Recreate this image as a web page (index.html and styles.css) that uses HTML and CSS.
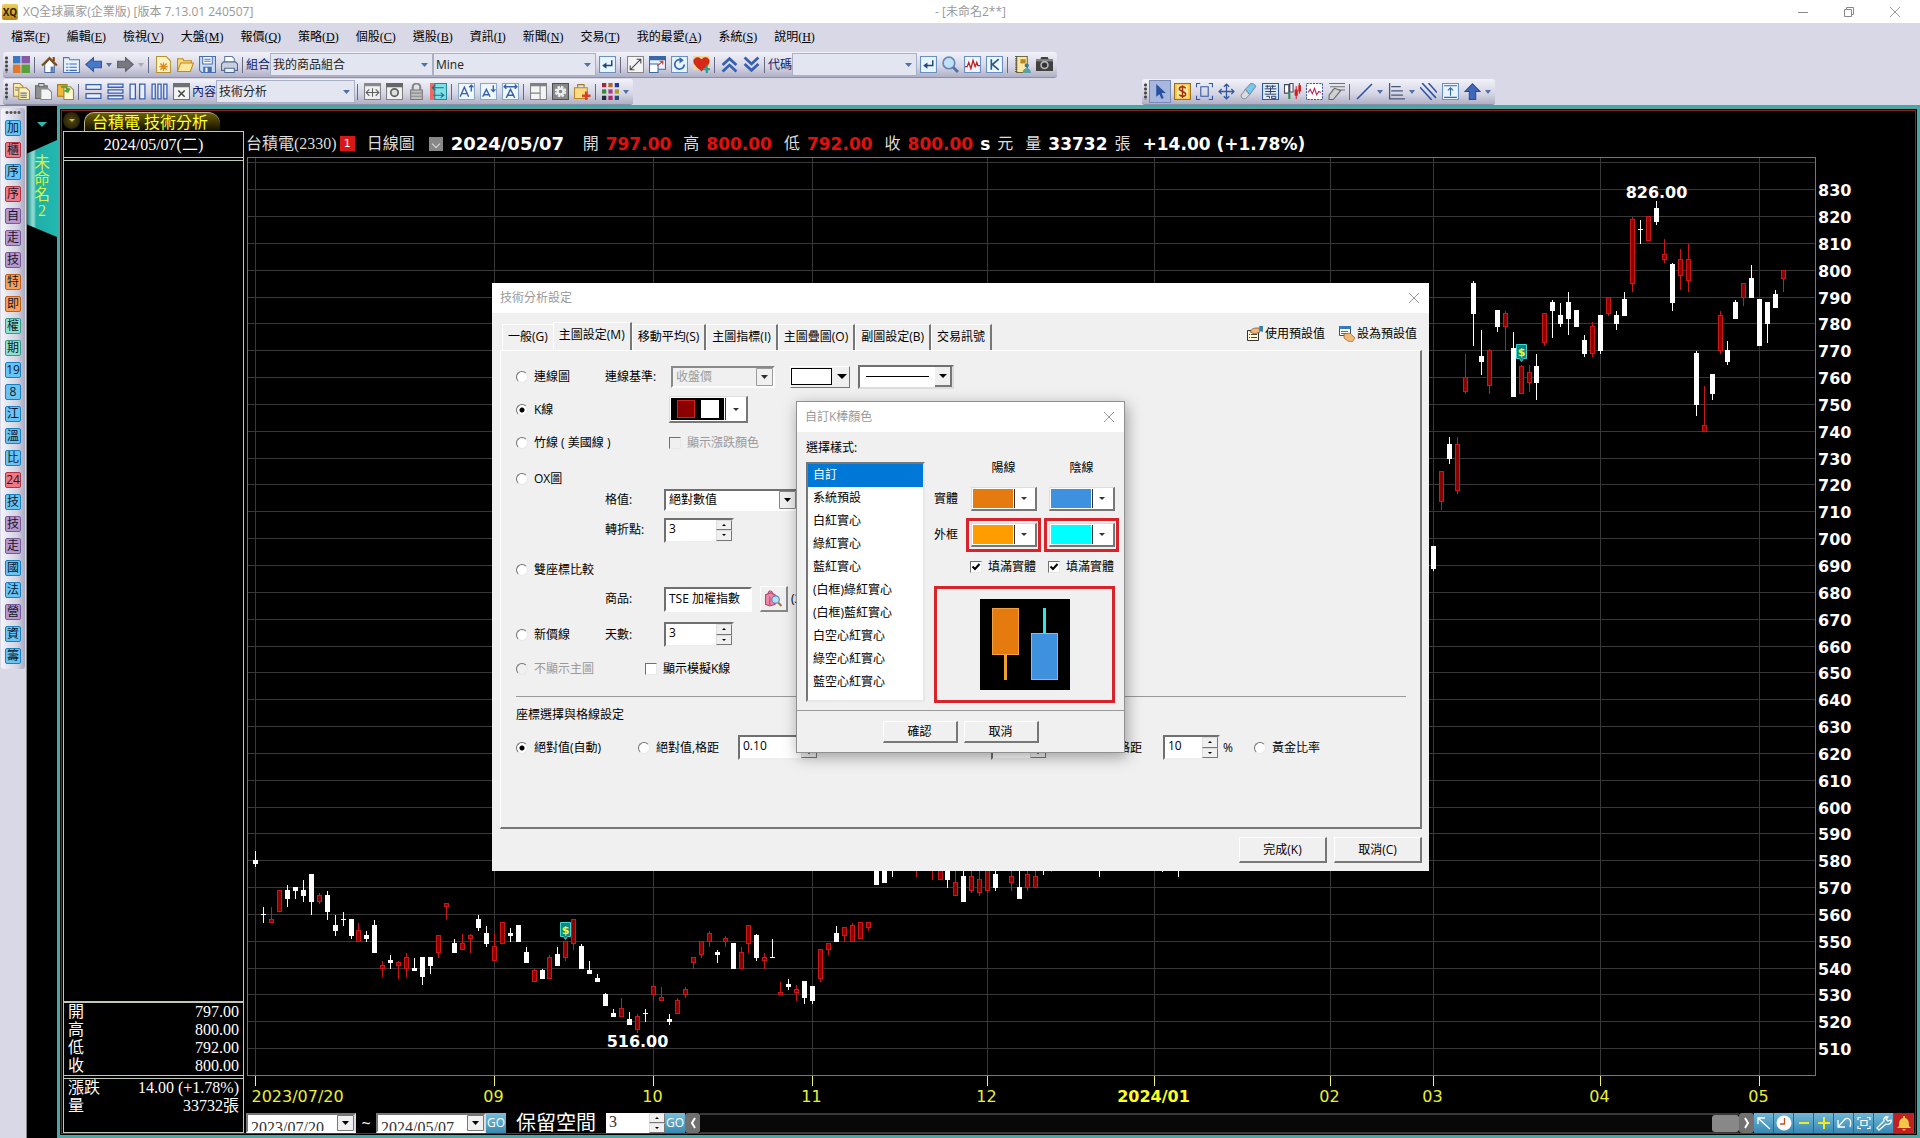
FILE: index.html
```html
<!DOCTYPE html>
<html lang="zh-Hant">
<head>
  <meta charset="UTF-8">
  <title>XQ全球贏家</title>
  <link rel="stylesheet" href="styles.css">
</head>
<body>

  <!-- 圖示 -->
  <svg class="sprite" aria-hidden="true">
    <symbol id="i-grid" viewBox="0 0 16 16"><path fill="#3878c0" d="M0 0h7v7H0z"/><path fill="#8858a8" d="M8 0h8v7H8z"/><path fill="#e07828" d="M0 8h7v8H0z"/><path fill="#58a038" d="M8 8h8v8H8z"/></symbol>
    <symbol id="i-home" viewBox="0 0 16 16"><path fill="#fff" stroke="#4868a0" d="M3.500 8v7.500h9V8L8 3z"/><path fill="#5880b8" d="M9 10h3v5H9z"/><path fill="none" stroke="#805010" stroke-width="2" d="M1 9l7-7 7 7"/><path fill="#904010" d="M11 1h2v4h-2z"/></symbol>
    <symbol id="i-list" viewBox="0 0 16 16"><path fill="#e8f2fc" stroke="#5078b0" d="M.5 1.500h5l1 2h9v12H.5z"/><path stroke="#3868b8" stroke-dasharray="2 1 7" d="M3 7.500h10M3 10.500h10M3 13.500h10"/></symbol>
    <symbol id="i-back" viewBox="0 0 16 16"><path fill="#4878c8" stroke="#3058a0" d="M.8 8L8 1.500V5h7.500v6H8v3.500z"/></symbol>
    <symbol id="i-fwd" viewBox="0 0 16 16"><path fill="#787880" stroke="#606068" d="M15.200 8L8 1.500V5H.5v6H8v3.500z"/></symbol>
    <symbol id="i-new" viewBox="0 0 16 16"><path fill="#fff4c8" stroke="#b89030" d="M1.500.5h9l4 4v11h-13z"/><path stroke="#e08818" stroke-width="1.200" d="M8 6v8M4 10h8M5 7l6 6M11 7l-6 6"/></symbol>
    <symbol id="i-open" viewBox="0 0 16 16"><path fill="#f8d878" stroke="#c08818" d="M.5 14.500v-12h5l1 2h7v2"/><path fill="#fce8a0" stroke="#c08818" d="M.5 14.500l3-8h12l-3 8z"/></symbol>
    <symbol id="i-save" viewBox="0 0 16 16"><path fill="#c8daf4" stroke="#4870b0" d="M.5.5h15v15H2.500l-2-2z"/><path fill="#fff" stroke="#4870b0" d="M3.500.5h9v7h-9z"/><path fill="#4870b0" d="M5 2.500h6v1H5zM5 4.500h6v1H5zM4 10h8v5H4z"/><path fill="#fff" d="M6 11h2v4H6z"/></symbol>
    <symbol id="i-print" viewBox="0 0 16 16"><path fill="#fff" stroke="#6078a0" d="M3.500 7V.5h7l2 2V7z"/><path fill="#c8d0e0" stroke="#506890" d="M.5 7.500l2-2h11l2 2v6H.5z"/><path fill="#e8f0f8" stroke="#506890" d="M3.500 11.500h9v4h-9z"/></symbol>
    <symbol id="i-enter" viewBox="0 0 16 16"><path fill="#e8f4ff" stroke="#6890c0" d="M.5.500h15v15H.5z"/><path fill="none" stroke="#204878" stroke-width="1.400" d="M12 4v5H5"/><path fill="#204878" d="M3 9l4-3v6z"/></symbol>
    <symbol id="i-expand" viewBox="0 0 16 16"><path fill="#f4f4f4" stroke="#888" d="M.5.5h15v15H.5z"/><path fill="none" stroke="#444" d="M3 13L13 3M9 3h4v4M3 9v4h4"/></symbol>
    <symbol id="i-win" viewBox="0 0 16 16"><path fill="#e8f0fc" stroke="#3868a8" d="M.5.5h15v12H.5z"/><path fill="#3868a8" d="M0 0h16v4H0z"/><path fill="#fff" stroke="#3868a8" d="M.5 7.500h8v8h-8z"/><path stroke="#c04020" d="M8 9l5-4M10 5h3v3" fill="none"/></symbol>
    <symbol id="i-reload" viewBox="0 0 16 16"><path fill="#e8f4ff" stroke="#6890c0" d="M.5.5h15v15H.5z"/><path fill="none" stroke="#3868b0" stroke-width="1.600" d="M9 3.500a4.500 4.500 0 1 0 3.500 4.500"/><path fill="#3868b0" d="M8 1l4 3-4 3z"/></symbol>
    <symbol id="i-heart" viewBox="0 0 16 16"><path fill="#f8d890" d="M0 0h15v13H0z"/><path fill="#d82818" stroke="#a01808" stroke-width=".6" d="M8 14C2 9 .5 7 .8 4.200 1.200 1.500 5.500.200 8 3.500 10.500.200 14.800 1.500 15.200 4.200 15.500 7 14 9 8 14z"/><path stroke="#289898" stroke-width="2" d="M13 9v7M9.500 12.500h7"/></symbol>
    <symbol id="i-up2" viewBox="0 0 16 16"><path fill="none" stroke="#3860b0" stroke-width="2.600" d="M1.500 8.500L8 2.500l6.500 6M1.500 14.500L8 8.500l6.500 6"/></symbol>
    <symbol id="i-down2" viewBox="0 0 16 16"><path fill="none" stroke="#3860b0" stroke-width="2.600" d="M1.500 1.500L8 7.500l6.500-6M1.500 7.500L8 13.500l6.500-6"/></symbol>
    <symbol id="i-search" viewBox="0 0 16 16"><circle cx="6.500" cy="6.500" r="5.500" fill="#c0e0f8" stroke="#6888b8" stroke-width="1.600"/><path stroke="#5070a8" stroke-width="2.600" d="M10.500 10.500l4.500 4.500"/></symbol>
    <symbol id="i-wave" viewBox="0 0 16 16"><path fill="#f0f4fc" stroke="#6890c0" d="M.5.5h15v15H.5z"/><path fill="none" stroke="#c02020" stroke-width="1.200" d="M1 10h2l1.500-4 2 6 2-8 2 6 1.500-4 1 3h2"/></symbol>
    <symbol id="i-k" viewBox="0 0 16 16"><path fill="#f0f8ff" stroke="#6890c0" d="M.5.5h15v15H.5z"/><path fill="none" stroke="#285890" stroke-width="1.600" d="M5 3v10M12 3L6 8l6 5"/></symbol>
    <symbol id="i-book" viewBox="0 0 16 16"><path fill="#f8e8a8" stroke="#706840" d="M2.500.5h10v15h-10z"/><path stroke="#554" stroke-dasharray="1 1" stroke-width="2" d="M2 0v16"/><path fill="#b88820" d="M6 3h5v4H6z"/><circle cx="12" cy="9" r="2" fill="#387898"/><path fill="#58a0a8" d="M8 16c0-6 8-6 8 0z"/></symbol>
    <symbol id="i-cam" viewBox="0 0 16 16"><path fill="#404040" d="M0 3h4l1-2h6l1 2h4v11H0z"/><path fill="#888" d="M0 3h16v2H0z"/><circle cx="8" cy="8.500" r="4" fill="#b8b8b8"/><circle cx="8" cy="8.500" r="2.500" fill="#303438"/></symbol>
    <symbol id="i-copy" viewBox="0 0 16 16"><path fill="#fce8a8" stroke="#a88838" d="M.5.5h6l3 3v9h-9z"/><path fill="#fff0b8" stroke="#a88838" d="M5.500 4.500h7l3 3v8h-10z"/><path stroke="#5878a8" d="M7 9.500h6M7 11.500h6M7 13.500h6M2 4.500h3M2 6.500h3"/></symbol>
    <symbol id="i-paste" viewBox="0 0 16 16"><path fill="#909090" stroke="#666" d="M.5 2.500h11v12H.5z"/><path fill="#ccc" stroke="#666" d="M3.500.5h5v3h-5z"/><path fill="#f4f4f4" stroke="#888" d="M5.500 5.500h7l3 3v7h-10z"/></symbol>
    <symbol id="i-pages" viewBox="0 0 16 16"><path fill="#f0b838" stroke="#a87818" d="M.5 1.500h9v11h-9z"/><path fill="#fff8d0" stroke="#888838" d="M6.500 3.500h6l3 3v9h-9z"/><path fill="none" stroke="#58a038" stroke-width="2" d="M4 4c4-2 6 1 6 4l-3-1M10 8l2-3"/></symbol>
    <symbol id="i-h2" viewBox="0 0 16 16"><path fill="#e8eefa" stroke="#3860b0" stroke-width="1.200" d="M1 1.500h14v4.500H1zM1 10h14v4.500H1z"/></symbol>
    <symbol id="i-h3" viewBox="0 0 16 16"><path fill="#e8eefa" stroke="#3860b0" stroke-width="1.200" d="M1 1h14v3H1zM1 6.500h14v3H1zM1 12h14v3H1z"/></symbol>
    <symbol id="i-v2" viewBox="0 0 16 16"><path fill="#e8eefa" stroke="#3860b0" stroke-width="1.200" d="M1 1h5v14H1zM10 1h5v14h-5z"/></symbol>
    <symbol id="i-v3" viewBox="0 0 16 16"><path fill="#e8eefa" stroke="#3860b0" stroke-width="1.200" d="M1 1h3v14H1zM6.500 1h3v14h-3zM12 1h3v14h-3z"/></symbol>
    <symbol id="i-close" viewBox="0 0 16 16"><path fill="#f4f4f4" stroke="#707070" d="M.5.5h15v15H.5z"/><path fill="#707070" d="M0 0h16v4H0z"/><path stroke="#444" stroke-width="1.400" d="M5 7l6 6M11 7l-6 6"/></symbol>
    <symbol id="i-fit" viewBox="0 0 16 16"><path fill="#f0f0f0" stroke="#808080" d="M.5.5h15v15H.5z"/><path fill="#888" d="M0 0h16v3H0z"/><path fill="none" stroke="#606060" d="M2 9h12M5 6L2 9l3 3M11 6l3 3-3 3M8 5v8"/></symbol>
    <symbol id="i-ring" viewBox="0 0 16 16"><path fill="#f0f0f0" stroke="#808080" d="M.5.5h15v15H.5z"/><path fill="#666" d="M0 0h16v4H0z"/><circle cx="8" cy="9" r="3.500" fill="#ddd" stroke="#606060" stroke-width="1.600"/></symbol>
    <symbol id="i-lock" viewBox="0 0 16 16"><path fill="none" stroke="#888" stroke-width="2" d="M4.500 7V4a3.500 3.500 0 0 1 7 0v3"/><path fill="#c0c0c0" stroke="#777" d="M2.500 6.500h11v9h-11z"/><path stroke="#888" d="M3 9.500h10M3 12.500h10"/></symbol>
    <symbol id="i-swap" viewBox="0 0 16 16"><path fill="#f06860" d="M0 0h7v16H0z"/><path fill="#80e0e8" stroke="#208898" d="M4.500.5h11v15h-11z"/><path fill="none" stroke="#207080" d="M2 4.500h11M5 2L2 4.500 5 7M3 11.500h10M10 9l3 2.500-3 2.500"/></symbol>
    <symbol id="i-aup" viewBox="0 0 16 16"><path fill="#f0f8ff" stroke="#88a8c8" d="M.5.5h15v15H.5z"/><path fill="none" stroke="#3860a8" stroke-width="1.300" d="M2 13L6 4l4 9M3.500 10h5M12.500 8V2M10.500 4l2-2 2 2"/></symbol>
    <symbol id="i-adown" viewBox="0 0 16 16"><path fill="#f0f8ff" stroke="#88a8c8" d="M.5.5h15v15H.5z"/><path fill="none" stroke="#3860a8" stroke-width="1.300" d="M2.500 13L6 6l3.500 7M4 11h4M12.500 2v6M10.500 6l2 2 2-2"/></symbol>
    <symbol id="i-awide" viewBox="0 0 16 16"><path fill="#f0f8ff" stroke="#88a8c8" d="M.5.5h15v15H.5z"/><path fill="none" stroke="#3860a8" stroke-width="1.300" d="M4 14l4-8 4 8M5.500 11.500h5M2 3.500h12M4 1.500l-2 2 2 2M12 1.500l2 2-2 2"/></symbol>
    <symbol id="i-pane" viewBox="0 0 16 16"><path fill="#f4f4f4" stroke="#808080" d="M.5.5h15v15H.5z"/><path fill="#808080" d="M0 0h16v3H0zM9 3h1v12H9zM1 9h8v1H1z"/></symbol>
    <symbol id="i-gear" viewBox="0 0 16 16"><path fill="#888" stroke="#505050" d="M.5.5h15v15H.5z"/><circle cx="8" cy="8" r="4.200" fill="none" stroke="#eee" stroke-width="2.400" stroke-dasharray="2.200 1.100"/><circle cx="8" cy="8" r="2.700" fill="none" stroke="#eee" stroke-width="2"/></symbol>
    <symbol id="i-bag" viewBox="0 0 16 16"><path fill="none" stroke="#a07828" d="M3.500 5V1.500h6V5"/><path fill="#fcdc80" stroke="#b88828" d="M.5 4.500h12v10H.5z"/><path stroke="#d84028" stroke-width="2.400" d="M11.500 8v8M7.500 12h8"/></symbol>
    <symbol id="i-nine" viewBox="0 0 16 16"><path fill="#a02838" d="M0 0h4v4H0z"/><path fill="#b06828" d="M6 0h4v4H6z"/><path fill="#283898" d="M12 0h4v4h-4z"/><path fill="#388838" d="M0 6h4v4H0z"/><path fill="#a83888" d="M6 6h4v4H6z"/><path fill="#a8a028" d="M12 6h4v4h-4z"/><path fill="#282838" d="M0 12h4v4H0z"/><path fill="#a82868" d="M6 12h4v4H6z"/><path fill="#284878" d="M12 12h4v4h-4z"/></symbol>
    <symbol id="i-ptr" viewBox="0 0 16 16"><path fill="#2850a0" d="M4 1v12l3-2.500L9 15l2-1-2-4.500h4z"/></symbol>
    <symbol id="i-usd" viewBox="0 0 16 16"><path fill="#fcc850" stroke="#987020" d="M.5.5h15v15H.5z"/><path fill="#fde8a0" d="M3 2h10v12H3z"/><path fill="none" stroke="#a03010" stroke-width="1.400" d="M11 5C10 3 5 3 5 5.500S11 8 11 10.500 6 13 5 11M8 2v12"/></symbol>
    <symbol id="i-sel" viewBox="0 0 16 16"><path fill="none" stroke="#3058a0" d="M.5 4V.5H4M12 .5h3.500V4M15.500 12v3.500H12M4 15.500H.5V12M4.500 3.500h7v9h-7z"/></symbol>
    <symbol id="i-move" viewBox="0 0 16 16"><path fill="none" stroke="#3058a0" stroke-width="1.200" d="M8 1v14M1 8h14M5.500 3.500L8 1l2.500 2.500M5.500 12.500L8 15l2.500-2.500M3.500 5.500L1 8l2.500 2.500M12.500 5.500L15 8l-2.500 2.500"/></symbol>
    <symbol id="i-erase" viewBox="0 0 16 16"><path fill="#78c8f0" stroke="#607888" stroke-width=".8" d="M5 6l5-5.500q3-.5 5 2.500L9 11z"/><path fill="#d8dce0" stroke="#708090" stroke-width=".8" d="M5 6l-4 5.500q0 3.500 4 3.500l4-4z"/></symbol>
    <symbol id="i-chip" viewBox="0 0 16 16"><path fill="#e0ecf8" stroke="#3058a0" d="M.5.5h15v15H.5z"/><path fill="none" stroke="#283c68" stroke-width=".9" d="M3 3h10M2.500 5.500h11M3 8h10M2.500 10.500h11M5 2v3M10 2v3M8 4v6M4 12.500h3v2M9 12.500h4v2H9z"/></symbol>
    <symbol id="i-candle" viewBox="0 0 16 16"><path fill="#fff" stroke="#404860" d="M.5 1.500h4v8h-4zM5.500.5h3v8h-3z"/><path stroke="#289040" stroke-width="2" d="M5 9v6"/><path stroke="#d02020" d="M11.500 3v12M14.500 0v10"/><path fill="#d02020" d="M10 6h3v6h-3zM13.500 2H16v6h-2.500z"/></symbol>
    <symbol id="i-box" viewBox="0 0 16 16"><path fill="#fff" stroke="#3058a0" stroke-dasharray="2 1" d="M.5.5h15v15H.5z"/><path fill="none" stroke="#c02050" d="M2 9l2-3 2 4 2-5 2 6 2-3 2 1"/></symbol>
    <symbol id="i-brush" viewBox="0 0 16 16"><path stroke="#707078" d="M1 .5h15M2 3.500h14M4 6.500h12"/><path fill="#d0d0d0" stroke="#666" d="M6 5l6 2-7 8.500H1v-4z"/></symbol>
    <symbol id="i-line" viewBox="0 0 16 16"><path stroke="#2850a0" stroke-width="1.400" d="M1 15L15 1"/></symbol>
    <symbol id="i-levels" viewBox="0 0 16 16"><path fill="none" stroke="#485878" stroke-width="1.200" d="M1.500 0v15H16M3 3.500h9M3 7.500h11M3 11.500h11"/></symbol>
    <symbol id="i-para" viewBox="0 0 16 16"><path stroke="#2850a0" stroke-width="1.400" d="M0 4l11 12M2 0l13 14M8 0l8 9"/></symbol>
    <symbol id="i-upbox" viewBox="0 0 16 16"><path fill="#e8f4ff" stroke="#6890c0" d="M.5.5h15v15H.5z"/><path fill="none" stroke="#3868a8" d="M2 2.500h12M2 13.500h12M8 12V5M5.500 7L8 4.500 10.500 7"/></symbol>
    <symbol id="i-bigup" viewBox="0 0 16 16"><path fill="#4068b8" stroke="#2848a0" d="M8 .8L15 8h-4v7.500H5V8H1z"/></symbol>
    <symbol id="i-x" viewBox="0 0 12 12"><path stroke="#999" d="M1 1l10 10M11 1L1 11"/></symbol>
    <symbol id="i-use" viewBox="0 0 16 16"><path fill="#fff8d8" stroke="#333" d="M.5 4.500h11v10H.5z"/><path stroke="#444" stroke-dasharray="1 1 6" d="M2 8.500h8M2 11.500h8"/><path fill="#f0b878" stroke="#805030" stroke-width=".8" d="M3 6c2-4 4-4 9-4l1 4-5 2z"/><path fill="#3880b0" d="M12 0h4v6l-3-1z"/></symbol>
    <symbol id="i-set" viewBox="0 0 16 16"><path fill="#fff" stroke="#405060" d="M.5.5h11v9H.5z"/><path fill="#3878c0" d="M0 0h12v3H0z"/><path stroke="#666" d="M2 5.500h7M2 7.500h7"/><path fill="#f0b878" stroke="#a06830" stroke-width=".8" d="M5 8l6-1 5 5-3 4c-3 0-6-2-8-4z"/></symbol>
    <symbol id="i-find" viewBox="0 0 16 16"><path fill="#f088a8" stroke="#b04870" d="M.5 4.500l5-2 4 2v9l-5 1.500-4-1.500z"/><path fill="none" stroke="#b04870" d="M3 4c0-4 4-4 4 0M4.500 6v8"/><circle cx="10" cy="9" r="3.500" fill="#b8e0f8" stroke="#5080a8"/><path stroke="#a07840" stroke-width="2" d="M12.500 12l3 3"/></symbol>
    <symbol id="i-nw" viewBox="0 0 16 16"><path fill="none" stroke="#fff" stroke-width="1.300" d="M2 9V3h7M2 3l12 11"/></symbol>
    <symbol id="i-clock" viewBox="0 0 16 16"><circle cx="8" cy="8" r="7.500" fill="#fff"/><path fill="none" stroke="#c05020" stroke-width="1.300" d="M8.500 3v6H4"/></symbol>
    <symbol id="i-minus" viewBox="0 0 16 16"><path stroke="#f0e820" stroke-width="2" d="M3 8h10"/></symbol>
    <symbol id="i-plus" viewBox="0 0 16 16"><path stroke="#f0e820" stroke-width="2" d="M2 8h12M8 2v12"/></symbol>
    <symbol id="i-undo" viewBox="0 0 16 16"><path fill="none" stroke="#fff" stroke-width="1.300" d="M2 5v7h7M2 12l7-8c4-2 7 1 5 8"/></symbol>
    <symbol id="i-frame" viewBox="0 0 16 16"><path fill="none" stroke="#fff" stroke-width="1.200" d="M2 5V2.500h3M11 2.500h3V5M14 11v2.500h-3M5 13.500H2V11M5 5.500h6v5H5z"/></symbol>
    <symbol id="i-wrench" viewBox="0 0 16 16"><path fill="none" stroke="#fff" stroke-width="1.300" d="M3 15l-2-2 7-7c-1-3 2-5 4-4l-2 2 2 2 3-1c1 3-2 5-5 4z"/></symbol>
    <symbol id="i-bell" viewBox="0 0 16 16"><path fill="#f0c848" d="M7 1h2v2c4 1 4 5 4 8l2 2H1l2-2c0-3 0-7 4-8zM6 14h4l-2 2z"/></symbol>
  </svg>

  <header class="titlebar">
    <span class="logo">XQ</span>
    <span class="app-name">XQ全球贏家(企業版) [版本 7.13.01 240507]</span>
    <span class="doc-name">- [未命名2**]</span>
    <div class="win-buttons">
      <button type="button" aria-label="最小化"><svg viewBox="0 0 12 12"><path stroke="#888" d="M1 6.500h10"/></svg></button>
      <button type="button" aria-label="還原"><svg viewBox="0 0 12 12"><path fill="none" stroke="#888" d="M1.500 3.500h7v7h-7zM3.500 3.500v-2h7v7h-2"/></svg></button>
      <button type="button" aria-label="關閉"><svg><use href="#i-x"/></svg></button>
    </div>
  </header>

  <nav class="menubar">
    <a href="#">檔案(<u>F</u>)</a>
    <a href="#">編輯(<u>E</u>)</a>
    <a href="#">檢視(<u>V</u>)</a>
    <a href="#">大盤(<u>M</u>)</a>
    <a href="#">報價(<u>Q</u>)</a>
    <a href="#">策略(<u>D</u>)</a>
    <a href="#">個股(<u>C</u>)</a>
    <a href="#">選股(<u>B</u>)</a>
    <a href="#">資訊(<u>I</u>)</a>
    <a href="#">新聞(<u>N</u>)</a>
    <a href="#">交易(<u>T</u>)</a>
    <a href="#">我的最愛(<u>A</u>)</a>
    <a href="#">系統(<u>S</u>)</a>
    <a href="#">說明(<u>H</u>)</a>
  </nav>

  <div class="toolbars">
    <div class="toolbar">
      <span class="grip"></span>
      <button type="button" aria-label="首頁格"><svg><use href="#i-grid"/></svg></button>
      <span class="sep"></span>
      <button type="button" aria-label="首頁"><svg><use href="#i-home"/></svg></button>
      <button type="button" aria-label="清單"><svg><use href="#i-list"/></svg></button>
      <button type="button" aria-label="上一頁"><svg><use href="#i-back"/></svg></button>
      <button type="button" class="drop" aria-label="上一頁清單"></button>
      <button type="button" aria-label="下一頁"><svg><use href="#i-fwd"/></svg></button>
      <button type="button" class="drop off" aria-label="下一頁清單"></button>
      <span class="sep"></span>
      <button type="button" aria-label="新增"><svg><use href="#i-new"/></svg></button>
      <button type="button" aria-label="開啟"><svg><use href="#i-open"/></svg></button>
      <button type="button" aria-label="儲存"><svg><use href="#i-save"/></svg></button>
      <button type="button" aria-label="列印"><svg><use href="#i-print"/></svg></button>
      <span class="sep"></span>
      <label for="group">組合</label>
      <select id="group" class="tool-select wide"><option>我的商品組合</option></select>
      <select class="tool-select wide" aria-label="清單"><option>Mine</option></select>
      <button type="button" aria-label="確定"><svg><use href="#i-enter"/></svg></button>
      <span class="sep"></span>
      <button type="button" aria-label="放大"><svg><use href="#i-expand"/></svg></button>
      <button type="button" aria-label="視窗"><svg><use href="#i-win"/></svg></button>
      <button type="button" aria-label="重新整理"><svg><use href="#i-reload"/></svg></button>
      <button type="button" aria-label="加入最愛"><svg><use href="#i-heart"/></svg></button>
      <span class="sep"></span>
      <button type="button" aria-label="上移"><svg><use href="#i-up2"/></svg></button>
      <button type="button" aria-label="下移"><svg><use href="#i-down2"/></svg></button>
      <span class="sep"></span>
      <label for="code">代碼</label>
      <select id="code" class="tool-select mid"><option></option></select>
      <button type="button" aria-label="送出"><svg><use href="#i-enter"/></svg></button>
      <button type="button" aria-label="搜尋"><svg><use href="#i-search"/></svg></button>
      <button type="button" aria-label="走勢"><svg><use href="#i-wave"/></svg></button>
      <button type="button" aria-label="K線"><svg><use href="#i-k"/></svg></button>
      <span class="sep"></span>
      <button type="button" aria-label="筆記"><svg><use href="#i-book"/></svg></button>
      <button type="button" aria-label="拍照"><svg><use href="#i-cam"/></svg></button>
    </div>

    <div class="toolbar-row">
      <div class="toolbar">
        <span class="grip"></span>
        <button type="button" aria-label="複製"><svg><use href="#i-copy"/></svg></button>
        <button type="button" aria-label="貼上"><svg><use href="#i-paste"/></svg></button>
        <button type="button" aria-label="複製頁面"><svg><use href="#i-pages"/></svg></button>
        <span class="sep"></span>
        <button type="button" aria-label="水平二分"><svg><use href="#i-h2"/></svg></button>
        <button type="button" aria-label="水平三分"><svg><use href="#i-h3"/></svg></button>
        <button type="button" aria-label="垂直二分"><svg><use href="#i-v2"/></svg></button>
        <button type="button" aria-label="垂直三分"><svg><use href="#i-v3"/></svg></button>
        <button type="button" aria-label="關閉視窗"><svg><use href="#i-close"/></svg></button>
        <label for="content">內容</label>
        <select id="content" class="tool-select narrow"><option>技術分析</option></select>
        <span class="sep"></span>
        <button type="button" aria-label="調整"><svg><use href="#i-fit"/></svg></button>
        <button type="button" aria-label="連動"><svg><use href="#i-ring"/></svg></button>
        <button type="button" aria-label="鎖定"><svg><use href="#i-lock"/></svg></button>
        <button type="button" aria-label="交換"><svg><use href="#i-swap"/></svg></button>
        <span class="sep"></span>
        <button type="button" aria-label="字放大"><svg><use href="#i-aup"/></svg></button>
        <button type="button" aria-label="字縮小"><svg><use href="#i-adown"/></svg></button>
        <button type="button" aria-label="字寬"><svg><use href="#i-awide"/></svg></button>
        <span class="sep"></span>
        <button type="button" aria-label="版面"><svg><use href="#i-pane"/></svg></button>
        <button type="button" aria-label="設定"><svg><use href="#i-gear"/></svg></button>
        <button type="button" aria-label="加入"><svg><use href="#i-bag"/></svg></button>
        <span class="sep"></span>
        <button type="button" aria-label="色彩"><svg><use href="#i-nine"/></svg></button>
        <button type="button" class="drop" aria-label="色彩清單"></button>
      </div>

      <div class="toolbar draw-tools">
        <span class="grip"></span>
        <button type="button" class="pressed" aria-label="游標"><svg><use href="#i-ptr"/></svg></button>
        <button type="button" aria-label="除權息"><svg><use href="#i-usd"/></svg></button>
        <button type="button" aria-label="區域"><svg><use href="#i-sel"/></svg></button>
        <button type="button" aria-label="移動"><svg><use href="#i-move"/></svg></button>
        <button type="button" aria-label="橡皮擦"><svg><use href="#i-erase"/></svg></button>
        <button type="button" aria-label="籌碼"><svg><use href="#i-chip"/></svg></button>
        <button type="button" aria-label="K棒"><svg><use href="#i-candle"/></svg></button>
        <button type="button" aria-label="區間"><svg><use href="#i-box"/></svg></button>
        <button type="button" aria-label="清除"><svg><use href="#i-brush"/></svg></button>
        <span class="sep"></span>
        <button type="button" aria-label="直線"><svg><use href="#i-line"/></svg></button>
        <button type="button" class="drop" aria-label="直線清單"></button>
        <button type="button" aria-label="黃金分割"><svg><use href="#i-levels"/></svg></button>
        <button type="button" class="drop" aria-label="黃金分割清單"></button>
        <button type="button" aria-label="平行線"><svg><use href="#i-para"/></svg></button>
        <button type="button" aria-label="高低"><svg><use href="#i-upbox"/></svg></button>
        <button type="button" aria-label="箭頭"><svg><use href="#i-bigup"/></svg></button>
        <button type="button" class="drop" aria-label="箭頭清單"></button>
      </div>
    </div>
  </div>

  <main class="workspace">
    <div class="dock-col">
      <div class="dock">
        <span class="dock-grip"></span>
        <button type="button" class="blue">加</button>
        <button type="button" class="red">櫃</button>
        <button type="button" class="blue">序</button>
        <button type="button" class="red">序</button>
        <button type="button" class="purple">自</button>
        <button type="button" class="purple">走</button>
        <button type="button" class="purple">技</button>
        <button type="button" class="orange">特</button>
        <button type="button" class="orange">即</button>
        <button type="button" class="green">權</button>
        <button type="button" class="green">期</button>
        <button type="button" class="blue">19</button>
        <button type="button" class="blue">8</button>
        <button type="button" class="blue">江</button>
        <button type="button" class="blue">溫</button>
        <button type="button" class="blue">比</button>
        <button type="button" class="red">24</button>
        <button type="button" class="blue">技</button>
        <button type="button" class="purple">技</button>
        <button type="button" class="purple">走</button>
        <button type="button" class="blue">國</button>
        <button type="button" class="blue">法</button>
        <button type="button" class="purple">營</button>
        <button type="button" class="blue">資</button>
        <button type="button" class="blue">籌</button>
      </div>
    </div>

    <div class="page-tabs">
      <span class="page-arrow"></span>
      <a href="#" class="page-tab">未命名2</a>
    </div>

    <div class="frame">
      <div class="frame-inner">
        <div class="tab-row">
          <button type="button" class="round" aria-label="分頁清單"></button>
          <a href="#" class="chart-tab">台積電 技術分析</a>
        </div>

        <div class="content">
          <aside class="side">
            <div class="side-date">2024/05/07(二)</div>
            <div class="side-empty"></div>
            <dl class="quote">
              <div><dt>開</dt><dd>797.00</dd></div>
              <div><dt>高</dt><dd>800.00</dd></div>
              <div><dt>低</dt><dd>792.00</dd></div>
              <div><dt>收</dt><dd>800.00</dd></div>
            </dl>
            <dl class="quote change">
              <div><dt>漲跌</dt><dd>14.00 (+1.78%)</dd></div>
              <div><dt>量</dt><dd>33732張</dd></div>
            </dl>
          </aside>

          <section class="chart-col">
            <div class="chart-head">
              <span class="stock">台積電(2330)<b class="badge">1</b></span>
              <span class="period">日線圖</span>
              <button type="button" class="period-drop" aria-label="週期"></button>
              <b class="date">2024/05/07</b>
              <span class="pair">開<b class="up">797.00</b></span>
              <span class="pair">高<b class="up">800.00</b></span>
              <span class="pair">低<b class="up">792.00</b></span>
              <span class="pair">收<b class="up">800.00</b><b>s</b>元</span>
              <span class="pair">量<b>33732</b>張</span>
              <b>+14.00 (+1.78%)</b>
            </div>
            <div class="plot"><svg id="chart"></svg></div>
            <div class="chart-foot">
              <select class="date-select" aria-label="起始日"><option>2023/07/20</option></select>
              <span class="tilde">~</span>
              <select class="date-select" aria-label="結束日"><option>2024/05/07</option></select>
              <button type="button" class="go">GO</button>
              <label for="space" class="space-label">保留空間</label>
              <span class="spin foot-spin"><input id="space" type="text" value="3"><span class="spin-btns"><button type="button" aria-label="增加"></button><button type="button" aria-label="減少"></button></span></span>
              <button type="button" class="go">GO</button>
              <button type="button" class="scroll-btn" aria-label="往左"><svg viewBox="0 0 8 12"><path fill="none" stroke="#fff" stroke-width="2" d="M6 1L3 6l3 5"/></svg></button>
              <div class="track"><span class="thumb"></span></div>
              <button type="button" class="scroll-btn" aria-label="往右"><svg viewBox="0 0 8 12"><path fill="none" stroke="#fff" stroke-width="2" d="M2 1l3 5-3 5"/></svg></button>
              <div class="foot-icons">
                <button type="button" aria-label="游標"><svg><use href="#i-nw"/></svg></button>
                <button type="button" aria-label="時間"><svg><use href="#i-clock"/></svg></button>
                <button type="button" aria-label="縮小"><svg><use href="#i-minus"/></svg></button>
                <button type="button" aria-label="放大"><svg><use href="#i-plus"/></svg></button>
                <button type="button" aria-label="復原"><svg><use href="#i-undo"/></svg></button>
                <button type="button" aria-label="全圖"><svg><use href="#i-frame"/></svg></button>
                <button type="button" aria-label="工具"><svg><use href="#i-wrench"/></svg></button>
                <button type="button" class="alarm" aria-label="警示"><svg><use href="#i-bell"/></svg></button>
              </div>
            </div>
          </section>
        </div>
      </div>
    </div>
  </main>

  <!-- 技術分析設定 -->
  <section class="dialog settings" role="dialog" aria-label="技術分析設定">
    <div class="dialog-title"><span>技術分析設定</span><button type="button" aria-label="關閉"><svg><use href="#i-x"/></svg></button></div>
    <div class="tabs-row">
      <div class="tabs">
        <button type="button">一般(G)</button>
        <button type="button" class="active">主圖設定(M)</button>
        <button type="button">移動平均(S)</button>
        <button type="button">主圖指標(I)</button>
        <button type="button">主圖疊圖(O)</button>
        <button type="button">副圖設定(B)</button>
        <button type="button">交易訊號</button>
      </div>
      <div class="presets">
        <button type="button"><svg><use href="#i-use"/></svg>使用預設值</button>
        <button type="button"><svg><use href="#i-set"/></svg>設為預設值</button>
      </div>
    </div>

    <div class="panel">
      <div class="row">
        <label class="opt"><input type="radio" name="kind">連線圖</label>
        <label for="base" class="caption">連線基準:</label>
        <div class="fields line-fields">
          <select id="base" class="combo base-combo" disabled><option>收盤價</option></select>
          <button type="button" class="line-color" aria-label="線條顏色"><span></span></button>
          <button type="button" class="line-style" aria-label="線條樣式"><span></span><i class="knob"></i></button>
        </div>
      </div>
      <div class="row">
        <label class="opt"><input type="radio" name="kind" checked>K線</label>
        <span></span>
        <div class="fields inset">
          <button type="button" class="pick k-pick" aria-label="K線顏色"><span class="k-colors"><i class="k-red"></i><i class="k-white"></i></span><span class="pick-arrow"></span></button>
        </div>
      </div>
      <div class="row">
        <label class="opt wide-opt"><input type="radio" name="kind">竹線 ( 美國線 )</label>
        <span></span>
        <div class="fields inset"><label class="opt off"><input type="checkbox" disabled>顯示漲跌顏色</label></div>
      </div>
      <div class="row row-ox"><label class="opt"><input type="radio" name="kind">OX圖</label></div>
      <div class="row row-thin">
        <span></span>
        <label for="step" class="caption">格值:</label>
        <div class="fields"><select id="step" class="combo step-combo"><option>絕對數值</option></select></div>
      </div>
      <div class="row row-tall">
        <span></span>
        <label for="turn" class="caption">轉折點:</label>
        <div class="fields"><span class="spin"><input id="turn" type="text" value="3"><span class="spin-btns"><button type="button" aria-label="增加"></button><button type="button" aria-label="減少"></button></span></span></div>
      </div>
      <div class="row"><label class="opt"><input type="radio" name="kind">雙座標比較</label></div>
      <div class="row row-thin">
        <span></span>
        <label for="item" class="caption">商品:</label>
        <div class="fields item-fields"><input id="item" class="text" type="text" value="TSE 加權指數"><button type="button" class="find" aria-label="尋找商品"><svg><use href="#i-find"/></svg></button><span>(2)</span></div>
      </div>
      <div class="row row-gap">
        <label class="opt"><input type="radio" name="kind">新價線</label>
        <label for="days" class="caption">天數:</label>
        <div class="fields"><span class="spin"><input id="days" type="text" value="3"><span class="spin-btns"><button type="button" aria-label="增加"></button><button type="button" aria-label="減少"></button></span></span></div>
      </div>
      <div class="row row-last">
        <label class="opt off"><input type="radio" name="kind" disabled>不顯示主圖</label>
        <label class="opt"><input type="checkbox">顯示模擬K線</label>
      </div>

      <div class="axis-title">座標選擇與格線設定</div>
      <div class="axis-row">
        <label class="opt"><input type="radio" name="axis" checked>絕對值(自動)</label>
        <label class="opt"><input type="radio" name="axis">絕對值,格距</label>
        <span class="spin spin-wide"><input type="text" value="0.10" aria-label="格距"><span class="spin-btns"><button type="button" aria-label="增加"></button><button type="button" aria-label="減少"></button></span></span>
        <div class="axis-mid">
          <span class="spin spin-small"><input type="text" aria-label="格數"><span class="spin-btns"><button type="button" aria-label="增加"></button><button type="button" aria-label="減少"></button></span></span>
          <label for="ratio">格距</label>
        </div>
        <div class="fields"><span class="spin spin-small"><input id="ratio" type="text" value="10"><span class="spin-btns"><button type="button" aria-label="增加"></button><button type="button" aria-label="減少"></button></span></span><span class="percent">%</span></div>
        <label class="opt"><input type="radio" name="axis">黃金比率</label>
      </div>
    </div>

    <div class="dialog-actions">
      <button type="button" class="push">完成(K)</button>
      <button type="button" class="push">取消(C)</button>
    </div>
  </section>

  <!-- 自訂K棒顏色 -->
  <section class="dialog colors" role="dialog" aria-label="自訂K棒顏色">
    <div class="dialog-title"><span>自訂K棒顏色</span><button type="button" aria-label="關閉"><svg><use href="#i-x"/></svg></button></div>
    <div class="colors-body">
      <div class="styles-col">
        <div class="styles-title" id="styleTitle">選擇樣式:</div>
        <ul class="style-list" role="listbox" aria-labelledby="styleTitle">
          <li role="option" aria-selected="true" class="selected">自訂</li>
          <li role="option">系統預設</li>
          <li role="option">白紅實心</li>
          <li role="option">綠紅實心</li>
          <li role="option">藍紅實心</li>
          <li role="option">(白框)綠紅實心</li>
          <li role="option">(白框)藍紅實心</li>
          <li role="option">白空心紅實心</li>
          <li role="option">綠空心紅實心</li>
          <li role="option">藍空心紅實心</li>
        </ul>
      </div>
      <div class="picks-col">
        <div class="picks">
          <span></span><span class="pick-head">陽線</span><span class="pick-head">陰線</span>
          <span>實體</span>
          <div class="pick-cell"><button type="button" class="pick" aria-label="陽線實體"><span class="swatch orange-dark"></span><span class="pick-arrow"></span></button></div>
          <div class="pick-cell"><button type="button" class="pick" aria-label="陰線實體"><span class="swatch blue-mid"></span><span class="pick-arrow"></span></button></div>
          <span>外框</span>
          <div class="pick-cell marked"><button type="button" class="pick" aria-label="陽線外框"><span class="swatch orange-light"></span><span class="pick-arrow"></span></button></div>
          <div class="pick-cell marked"><button type="button" class="pick" aria-label="陰線外框"><span class="swatch cyan"></span><span class="pick-arrow"></span></button></div>
          <span></span>
          <label class="opt fill"><input type="checkbox" checked>填滿實體</label>
          <label class="opt fill"><input type="checkbox" checked>填滿實體</label>
        </div>
        <div class="preview">
          <svg viewBox="0 0 90 91" width="90" height="91">
            <rect width="90" height="91" fill="#000"/>
            <path stroke="#f0a030" stroke-width="3" d="M25.500 56v25"/>
            <rect x="12.500" y="9.500" width="26" height="46" fill="#e57b0e" stroke="#f0a040"/>
            <path stroke="#28e8e8" stroke-width="3" d="M64.500 9v25"/>
            <rect x="51.500" y="34.500" width="26" height="46" fill="#3e91df" stroke="#38e0f0"/>
          </svg>
        </div>
      </div>
    </div>
    <div class="colors-actions">
      <button type="button" class="push">確認</button>
      <button type="button" class="push">取消</button>
    </div>
  </section>

  <script src="chart.js"></script>
</body>
</html>
```

FILE: styles.css
```css
* {
  box-sizing: border-box;
}

body {
  margin: 0;
  height: 100vh;
  display: flex;
  flex-direction: column;
  overflow: hidden;
  position: relative;
  background: #d8d8e6;
  color: #000;
  font-family: "Open Sans", "Noto Sans CJK TC", sans-serif;
  font-size: 12px;
  line-height: 16px;
}

button,
input,
select {
  font: inherit;
  color: inherit;
  margin: 0;
  padding: 0;
  border: 0;
  border-radius: 0;
  background: none;
}

ul,
dl,
dd {
  margin: 0;
  padding: 0;
  list-style: none;
}

a {
  color: inherit;
  text-decoration: none;
}

.sprite {
  position: absolute;
  width: 0;
  height: 0;
}

/* 標題列 */
.titlebar {
  height: 23px;
  flex: none;
  display: flex;
  align-items: center;
  background: #fff;
  color: #999;
  padding: 0 2px;
}

.logo {
  width: 16px;
  height: 16px;
  margin-right: 5px;
  border-radius: 2px;
  background: linear-gradient(#f0d060, #b88818);
  color: #302000;
  font-size: 10px;
  font-weight: bold;
  text-align: center;
}

.app-name {
  flex: 1;
}

.win-buttons {
  flex: 1;
  display: flex;
  justify-content: flex-end;
}

.win-buttons button {
  width: 46px;
  display: flex;
  justify-content: center;
}

.win-buttons svg {
  width: 12px;
  height: 12px;
}

/* 選單 */
.menubar {
  height: 28px;
  flex: none;
  display: flex;
  align-items: center;
  gap: 17px;
  padding: 0 11px;
  font-family: "Liberation Serif", "Noto Sans CJK TC", serif;
}

/* 工具列 */
.toolbars {
  flex: none;
  display: flex;
  flex-direction: column;
  gap: 1px;
  padding: 1px 3px 0;
}

.toolbar-row {
  display: flex;
}

.draw-tools {
  margin-left: 509px;
}

.toolbar {
  height: 26px;
  width: max-content;
  display: flex;
  align-items: center;
  padding-right: 2px;
  background: linear-gradient(#f2f2fa, #d4d4e4 60%, #b0b0c6);
  border-bottom: 1px solid #8e8ea8;
  border-radius: 3px;
  color: #10206c;
}

.toolbar button {
  width: 22px;
  height: 23px;
  display: flex;
  align-items: center;
  justify-content: center;
}

.toolbar svg {
  width: 17px;
  height: 17px;
}

.toolbar .pressed {
  background: #a8b8dc;
  border: 1px solid #7888b8;
}

.toolbar label {
  width: 24px;
}

.grip {
  width: 7px;
  height: 17px;
  background: radial-gradient(circle, #444 1px, transparent 2px) 0 0 / 7px 4px;
}

.sep {
  width: 1px;
  height: 16px;
  margin: 0 3px 0 2px;
  background: #686888;
}

.toolbar .drop {
  width: 10px;
}

.drop::before {
  content: "";
  border: 3px solid transparent;
  border-top: 4px solid #5070a8;
  border-bottom: 0;
}

.drop.off::before {
  border-top-color: #aaa;
}

.tool-select {
  appearance: none;
  height: 23px;
  padding-left: 2px;
  border: 1px solid #a8b0c4;
  color: #222;
  background: #e3e6f0 url("data:image/svg+xml,%3Csvg xmlns='http://www.w3.org/2000/svg' width='7' height='4'%3E%3Cpath fill='%235070a8' d='M0 0h7L3.500 4z'/%3E%3C/svg%3E") no-repeat right 4px center;
}

.tool-select.wide {
  width: 163px;
}

.tool-select.mid {
  width: 125px;
}

.tool-select.narrow {
  width: 139px;
}

/* 左側按鈕 */
.workspace {
  flex: 1;
  min-height: 0;
  display: flex;
  border-top: 1px solid #888;
}

.dock-col {
  width: 27px;
  border-right: 1px solid #888;
}

.dock {
  margin: 2px 1px 0;
  padding: 3px 4px 5px;
  display: flex;
  flex-direction: column;
  gap: 6px;
  border-radius: 3px;
  background: linear-gradient(90deg, #f4f4fa, #d0d0e0 70%, #a8a8c0);
}

.dock-grip {
  height: 3px;
  background: radial-gradient(circle, #555 1px, transparent 2px) 0 0 / 4px 3px;
}

.dock button {
  width: 16px;
  height: 16px;
  border: 1px solid;
  border-radius: 2px;
  line-height: 14px;
  color: #101828;
  overflow: hidden;
}

.dock .blue {
  background: #68c4f4;
  border-color: #1880c0;
}

.dock .red {
  background: #f07884;
  border-color: #b83040;
}

.dock .purple {
  background: #b898cc;
  border-color: #7c5898;
}

.dock .orange {
  background: #f8a058;
  border-color: #c06018;
}

.dock .green {
  background: #90e0d0;
  border-color: #389888;
}

/* 頁籤 */
.page-tabs {
  width: 30px;
  padding-top: 16px;
  background: #000;
}

.page-arrow {
  display: block;
  width: 10px;
  margin: 0 auto;
  border: 5px solid transparent;
  border-top: 5px solid #30b8b0;
  border-bottom: 0;
}

.page-tab {
  display: block;
  height: 97px;
  margin-top: 13px;
  padding: 15px 7px;
  clip-path: polygon(100% 0, 0 14%, 0 87%, 100% 100%);
  background: linear-gradient(90deg, #10807c, #88d8d0 5px, #88d8d0 7px, #20b0a8 9px, #20b8b0);
  color: #d8f040;
  font-family: "Liberation Serif", "Noto Sans CJK TC", serif;
  font-size: 16px;
  text-align: center;
  word-break: break-all;
}

.frame {
  flex: 1;
  min-width: 0;
  border: 3px solid #48a8a4;
  background: #000;
  padding: 1px;
}

.frame-inner {
  height: 100%;
  display: flex;
  flex-direction: column;
  border: 1px solid #902020;
  padding: 0 1px;
  color: #fff;
}

.tab-row {
  height: 20px;
  display: flex;
  align-items: flex-end;
}

.round {
  width: 17px;
  height: 17px;
  margin: 0 4px 2px 0;
  border-radius: 50%;
  background: radial-gradient(#504818, #181400);
  display: flex;
  align-items: center;
  justify-content: center;
}

.round::before {
  content: "";
  border: 3px solid transparent;
  border-top-color: #c8b840;
  border-bottom: 0;
}

.chart-tab {
  height: 19px;
  padding: 0 12px 0 7px;
  border-top: 1px solid #b8b898;
  border-left: 1px solid #b8b898;
  border-radius: 10px 12px 0 0;
  background: linear-gradient(#6c6000, #100c00);
  color: #ffff30;
  font-family: "Liberation Serif", "Noto Sans CJK TC", serif;
  font-size: 16px;
  line-height: 20px;
}

.content {
  flex: 1;
  min-height: 0;
  display: flex;
  gap: 2px;
}

/* 數值面板 */
.side {
  width: 181px;
  display: flex;
  flex-direction: column;
  border: 1px solid #c0c8b8;
  font-family: "Liberation Serif", "Noto Sans CJK TC", serif;
  font-size: 16px;
  line-height: 18px;
}

.side-date {
  height: 29px;
  padding-top: 4px;
  text-align: center;
  border-bottom: 4px double #c0c8b8;
}

.side-empty {
  flex: 1;
}

.quote {
  padding: 0 4px;
  border-top: 2px solid #c0c8b8;
}

.quote div {
  display: flex;
  justify-content: space-between;
}

.quote.change {
  height: 57px;
  border-top: 4px double #c0c8b8;
}

/* 圖表 */
.chart-col {
  flex: 1;
  min-width: 0;
  display: flex;
  flex-direction: column;
}

.chart-head {
  height: 25px;
  display: flex;
  align-items: center;
  gap: 12px;
  color: #ddd;
  font-family: "Liberation Serif", "Noto Sans CJK TC", serif;
  font-size: 16px;
  white-space: nowrap;
}

.chart-head b {
  color: #fff;
  font-family: "DejaVu Sans", sans-serif;
  font-size: 17px;
}

.chart-head .up {
  color: #e01010;
}

.stock,
.pair {
  display: flex;
  align-items: center;
  gap: 7px;
}

.stock {
  gap: 3px;
}

.chart-head .badge {
  width: 15px;
  height: 15px;
  background: #d81818;
  font-size: 11px;
  font-weight: normal;
  line-height: 15px;
  text-align: center;
}

.period-drop {
  width: 14px;
  height: 14px;
  margin: 0 -6px 0 2px;
  background: #888;
  display: flex;
  align-items: center;
  justify-content: center;
}

.period-drop::before {
  content: "";
  width: 5px;
  height: 5px;
  border: solid #ddd;
  border-width: 0 1px 1px 0;
  transform: rotate(45deg);
}

.chart-head .date {
  min-width: 120px;
  margin-left: 2px;
  font-size: 18px;
}

.plot {
  flex: 1;
  min-height: 0;
}

#chart {
  display: block;
  width: 100%;
  height: 100%;
  font-family: "DejaVu Sans", sans-serif;
  font-size: 16px;
}

.grid {
  stroke: #383838;
  shape-rendering: crispEdges;
}

.edge {
  fill: none;
  stroke: #b05878;
  shape-rendering: crispEdges;
}

.tick {
  stroke: #f0f070;
  shape-rendering: crispEdges;
}

.price-label {
  fill: #fff;
  font-weight: bold;
}

.month-label {
  fill: #e8f030;
}

.month-label.year {
  font-weight: bold;
  fill: #ffff20;
}

.candle {
  shape-rendering: crispEdges;
}

.candle.rise {
  fill: #8b0000;
  stroke: #c81818;
}

.candle.fall {
  fill: #fff;
  stroke: #fff;
}

.marker {
  fill: #108880;
  stroke: #40d8d8;
}

.marker-text {
  fill: #e8f830;
  font-size: 11px;
  font-weight: bold;
}

.chart-foot {
  height: 20px;
  display: flex;
  align-items: stretch;
}

.date-select {
  appearance: none;
  width: 110px;
  padding: 5px 0 0 3px;
  overflow: hidden;
  border: 2px solid #888;
  border-color: #777 #ddd #fff #777;
  background: #fff url("data:image/svg+xml,%3Csvg xmlns='http://www.w3.org/2000/svg' width='17' height='16'%3E%3Cpath fill='%23f0f0f0' stroke='%23777' d='M.5.5h16v15H.5z'/%3E%3Cpath fill='%23000' d='M5 6h7L8.500 10z'/%3E%3C/svg%3E") no-repeat right center;
  color: #333;
  font-family: "Liberation Serif", serif;
  font-size: 16px;
}

.tilde {
  width: 20px;
  text-align: center;
  font-size: 16px;
  line-height: 20px;
}

.go {
  width: 20px;
  background: linear-gradient(#78c0dc, #3888b0);
  color: #fff;
}

.space-label {
  width: 100px;
  padding-left: 10px;
  font-size: 20px;
  line-height: 20px;
}

.scroll-btn {
  width: 15px;
  background: #707070;
  border-radius: 3px;
}

.scroll-btn svg {
  display: block;
  width: 8px;
  height: 12px;
  margin: 0 auto;
}

.track {
  flex: 1;
  display: flex;
  justify-content: flex-end;
  background: #080808;
  border: solid #383838;
  border-width: 2px 0 1px;
}

.thumb {
  width: 27px;
  background: #888;
  border-radius: 3px;
}

.foot-icons {
  display: flex;
}

.foot-icons button {
  width: 20px;
  display: flex;
  align-items: center;
  justify-content: center;
  background: linear-gradient(#70b8d8, #3888b4);
  border-right: 1px solid #286888;
}

.foot-icons svg {
  width: 16px;
  height: 16px;
}

.foot-icons .alarm {
  background: #c02020;
}

/* 對話框 */
.dialog {
  position: absolute;
  display: flex;
  flex-direction: column;
  background: #f0f0f0;
}

.settings {
  left: 492px;
  top: 283px;
  width: 937px;
  height: 588px;
}

.colors {
  left: 796px;
  top: 401px;
  width: 329px;
  height: 352px;
  border: 1px solid #909090;
  box-shadow: 2px 4px 14px rgba(0, 0, 0, 0.35);
}

.dialog-title {
  height: 30px;
  flex: none;
  display: flex;
  align-items: center;
  justify-content: space-between;
  padding: 0 9px 0 8px;
  background: #fff;
  color: #999;
}

.dialog-title svg {
  display: block;
  width: 12px;
  height: 12px;
}

.tabs-row {
  display: flex;
  justify-content: space-between;
  padding: 9px 12px 0 8px;
}

.tabs {
  display: flex;
  align-items: flex-end;
}

.tabs button {
  height: 26px;
  padding: 0 5px 2px;
  border: 1px solid #fff;
  border-bottom: 0;
  border-right: 2px solid #777;
}

.tabs button:first-child {
  margin-left: 2px;
  border-right: 0;
}

.tabs .active {
  height: 28px;
  padding-bottom: 4px;
}

.presets {
  display: flex;
  align-items: center;
  gap: 14px;
  padding-bottom: 4px;
}

.presets button {
  display: flex;
  align-items: center;
  gap: 2px;
}

.presets svg {
  width: 16px;
  height: 16px;
}

.panel {
  flex: 1;
  margin: 0 7px 0 8px;
  padding: 9px 14px 0 15px;
  border: 1px solid #fff;
  border-right: 2px solid #777;
  border-bottom: 2px solid #777;
}

.row {
  height: 33px;
  display: grid;
  grid-template-columns: 89px 59px 1fr;
  align-items: center;
  white-space: nowrap;
}

.row-ox {
  height: 20px;
  margin-top: 10px;
}

.row-thin {
  height: 14px;
}

.row-tall {
  height: 46px;
  margin-top: 4px;
}

.row-gap {
  margin-top: 18px;
}

.row-last {
  height: 36px;
  grid-template-columns: 129px 1fr;
}

.opt {
  display: flex;
  align-items: center;
  gap: 6px;
}

.off {
  color: #999;
}

.fields {
  display: flex;
  align-items: center;
}

.inset {
  padding-left: 5px;
}

input[type="radio"],
input[type="checkbox"] {
  appearance: none;
  flex: none;
  width: 12px;
  height: 12px;
  background: #fff;
  border: 1px solid;
  border-color: #707070 #e8e8e8 #e8e8e8 #707070;
}

input[type="radio"] {
  border-radius: 50%;
}

input[type="radio"]:checked {
  background: radial-gradient(circle, #000 2px, #fff 3px);
}

input:disabled {
  background: #f0f0f0;
}

input[type="checkbox"]:checked {
  background: #fff url("data:image/svg+xml,%3Csvg xmlns='http://www.w3.org/2000/svg' width='10' height='10'%3E%3Cpath fill='none' stroke='%23000' stroke-width='2' d='M1.500 4.500L4 7l4.500-5'/%3E%3C/svg%3E") center no-repeat;
}

.combo {
  appearance: none;
  height: 22px;
  padding-left: 3px;
  border: 2px solid #777;
  border-color: #707070 #fff #fff #707070;
  background: #fff url("data:image/svg+xml,%3Csvg xmlns='http://www.w3.org/2000/svg' width='17' height='18'%3E%3Cpath fill='%23f0f0f0' stroke='%23888' d='M.5.5h16v17H.5z'/%3E%3Cpath fill='%23000' d='M5 7h7L8.500 11z'/%3E%3C/svg%3E") no-repeat right center;
}

.combo:disabled {
  background-color: #f0f0f0;
  color: #888;
  opacity: 0.8;
}

.base-combo {
  width: 104px;
}

.step-combo {
  width: 134px;
}

.line-fields {
  padding-left: 7px;
  gap: 15px;
}

.line-color {
  width: 60px;
  height: 22px;
  display: flex;
  align-items: center;
  gap: 5px;
  border: 1px solid #fff;
  border-right-color: #777;
  border-bottom-color: #777;
}

.line-color span {
  width: 41px;
  height: 17px;
  background: #fff;
  border: 1px solid #000;
}

.line-color::after {
  content: "";
  border: 5px solid transparent;
  border-top-color: #000;
  border-bottom: 0;
}

.line-style {
  width: 96px;
  height: 24px;
  margin-left: -7px;
  display: flex;
  align-items: center;
  justify-content: space-between;
  padding-left: 6px;
  background: #fff;
  border: 2px solid #707070;
  border-right-color: #ddd;
  border-bottom-color: #ddd;
}

.line-style span {
  width: 63px;
  height: 1px;
  background: #000;
}

.knob {
  width: 17px;
  height: 20px;
  display: flex;
  align-items: center;
  justify-content: center;
  background: #f0f0f0;
  border-right: 2px solid #777;
  border-bottom: 2px solid #777;
}

.knob::before {
  content: "";
  border: 4px solid transparent;
  border-top-color: #000;
  border-bottom: 0;
}

.pick {
  width: 66px;
  height: 24px;
  display: flex;
  padding: 1px;
  background: #fff;
  border: 1px solid #ddd;
  border-right: 2px solid #777;
  border-bottom: 2px solid #777;
}

.swatch {
  flex: 1;
  margin-right: 1px;
}

.orange-dark {
  background: #e57b0e;
}

.blue-mid {
  background: #3e91df;
}

.orange-light {
  background: #ff9c00;
}

.cyan {
  background: #00ffff;
}

.pick-arrow {
  width: 20px;
  border-left: 1px solid #333;
  display: flex;
  align-items: center;
  justify-content: center;
}

.pick-arrow::before {
  content: "";
  border: 3px solid transparent;
  border-top-color: #333;
  border-bottom: 0;
}

.k-pick {
  width: 79px;
  height: 27px;
}

.k-colors {
  flex: 1;
  display: flex;
  align-items: center;
  justify-content: center;
  gap: 6px;
  margin-right: 1px;
  background: #000;
}

.k-colors i {
  width: 18px;
  height: 18px;
  background: #fff;
}

.k-colors .k-red {
  background: #8b0000;
  border: 1px solid #d02020;
}

.spin {
  width: 70px;
  height: 25px;
  display: flex;
  background: #fff;
  border: 2px solid #707070;
  border-right-color: #eee;
  border-bottom-color: #eee;
}

.spin input {
  flex: 1;
  min-width: 0;
  padding: 0 0 3px 3px;
}

.spin-wide {
  width: 81px;
}

.spin-small {
  width: 57px;
}

.spin-btns {
  width: 16px;
  display: flex;
  flex-direction: column;
}

.spin-btns button {
  flex: 1;
  display: flex;
  align-items: center;
  justify-content: center;
  background: #f0f0f0;
  border: 1px solid #ddd;
  border-right-color: #777;
  border-bottom-color: #777;
}

.spin-btns button::before {
  content: "";
  border: 2px solid transparent;
  border-bottom-color: #000;
  border-top: 0;
}

.spin-btns button:last-child::before {
  border: 2px solid transparent;
  border-top-color: #000;
  border-bottom: 0;
}

.foot-spin {
  width: 59px;
  height: 20px;
  border: 0;
  color: #333;
  font-family: "Liberation Serif", serif;
  font-size: 16px;
}

.text {
  width: 88px;
  height: 25px;
  padding: 0 0 3px 3px;
  background: #fff;
  border: 2px solid #707070;
  border-right-color: #fff;
  border-bottom-color: #fff;
}

.find {
  width: 28px;
  height: 26px;
  margin: 0 3px 0 8px;
  border: 1px solid #fff;
  border-right: 2px solid #888;
  border-bottom: 2px solid #888;
}

.find svg {
  display: block;
  width: 17px;
  height: 17px;
  margin: 0 auto;
}

.axis-title {
  margin: 9px 0 0;
  padding-top: 10px;
  border-top: 1px solid #999;
}

.axis-row {
  height: 25px;
  margin-top: 12px;
  display: grid;
  grid-template-columns: 122px 100px 253px 172px 91px 1fr;
  align-items: center;
}

.axis-mid {
  display: flex;
  align-items: center;
  justify-content: space-between;
  padding-right: 21px;
}

.percent {
  padding-left: 3px;
}

.dialog-actions {
  display: flex;
  justify-content: flex-end;
  gap: 7px;
  padding: 8px 7px;
}

.push {
  width: 88px;
  height: 26px;
  border: 1px solid #fff;
  border-right: 2px solid #777;
  border-bottom: 2px solid #777;
}

.colors-body {
  display: flex;
  height: 279px;
  padding: 8px 9px 0;
  border-bottom: 1px solid #999;
}

.styles-col {
  width: 119px;
  flex: none;
}

.style-list {
  height: 240px;
  margin-top: 6px;
  background: #fff;
  border: 2px solid #777;
  border-right-color: #e8e8e8;
  border-bottom-color: #e8e8e8;
}

.style-list li {
  height: 23px;
  padding-left: 5px;
  line-height: 22px;
}

.style-list .selected {
  background: #0078d7;
  color: #fff;
}

.picks-col {
  flex: none;
  margin-left: 9px;
}

.picks {
  display: grid;
  grid-template-columns: 29px 75px 75px;
  grid-template-rows: 24px 37px 36px 28px;
  column-gap: 3px;
  padding-top: 16px;
  align-items: center;
  white-space: nowrap;
}

.pick-head {
  text-align: center;
}

.pick-cell {
  display: flex;
  justify-content: center;
}

.marked {
  height: 34px;
  padding: 2px 0;
  border: 3px solid #d8232a;
}

.fill {
  padding-left: 4px;
}

.preview {
  width: 181px;
  height: 117px;
  margin-top: 5px;
  display: flex;
  align-items: center;
  justify-content: center;
  border: 3px solid #d8232a;
}

.colors-actions {
  display: flex;
  justify-content: center;
  gap: 6px;
  padding-top: 10px;
}

.colors-actions .push {
  width: 75px;
  height: 22px;
}
```

FILE: chart.js
```js
// [編號, 最高, 實體上緣, 實體下緣, 最低, 是否收紅]
const candles = [
  [0,584,580,579,578,0],[1,563,560,560,557,0],[2,563,558,557,557,1],[3,569,569,561,561,1],
  [4,571,569,566,563,0],[5,570,570,569,566,0],[6,573,569,567,565,0],[7,575,575,565,560,0],
  [8,568,567,565,564,1],[9,569,567,561,558,0],[10,560,556,554,552,0],[11,561,558,558,556,0],
  [12,558,558,552,551,0],[13,557,554,550,550,1],[14,554,552,551,550,0],[15,558,556,546,546,0],
  [16,543,541,540,537,1],[17,545,543,542,540,0],[18,543,542,541,536,1],[19,546,544,540,537,1],
  [20,544,540,539,539,0],[21,544,544,537,534,0],[22,544,544,541,538,0],[23,552,552,546,544,1],
  [24,564,564,563,558,1],[25,551,549,546,546,0],[26,553,549,547,547,1],[27,553,552,551,546,1],
  [28,560,558,555,554,0],[29,556,553,549,548,0],[30,553,548,543,543,1],[31,557,557,549,549,1],
  [32,555,553,552,550,0],[33,556,556,550,550,0],[34,548,546,542,542,0],[35,540,539,535,535,1],
  [36,540,539,536,536,0],[37,545,544,536,536,1],[38,548,545,541,541,0],[39,550,550,544,543,1],
  [40,558,558,549,547,1],[41,549,548,540,540,0],[42,543,539,538,538,0],[43,538,536,535,535,0],
  [44,531,530,526,526,0],[45,525,523,522,522,0],[46,529,525,522,522,1],[47,524,521,519,519,0],
  [48,523,522,517,516,1],[49,525,523,523,520,0],[50,534,533,530,528,1],[51,533,529,528,528,1],
  [52,523,521,520,519,0],[53,529,528,523,523,1],[54,533,532,530,529,1],[55,544,544,542,540,1],
  [56,550,550,545,544,1],[57,554,553,550,548,1],[58,547,546,545,542,0],[59,552,551,550,548,1],
  [60,549,549,540,540,0],[61,548,546,540,540,1],[62,556,556,549,546,1],[63,553,552,544,543,0],
  [64,546,544,543,540,1],[65,551,544,544,544,0],[66,535,531,530,530,1],[67,536,534,533,532,0],
  [68,534,532,531,528,1],[69,535,535,529,527,0],[70,533,533,528,527,0],[71,547,547,536,535,1],
  [72,549,549,547,545,1],[73,556,553,550,550,0],[74,555,555,552,550,1],[75,557,556,550,550,1],
  [76,557,557,551,551,1],[77,557,557,555,554,1],[78,580,580,571,571,0],[79,580,579,572,572,0],
  [80,580,579,577,574,0],[83,580,578,577,574,1],[85,580,578,577,573,1],[86,580,577,573,573,1],
  [87,580,576,573,570,0],[88,579,572,567,567,1],[89,578,574,565,565,0],[90,580,574,569,568,1],
  [91,579,573,568,567,1],[92,580,577,569,568,1],[93,579,575,570,569,0],[95,577,574,572,569,1],
  [96,579,570,566,566,0],[97,579,575,570,569,1],[98,577,574,570,570,1],[99,580,579,577,575,0],
  [100,580,579,577,576,1],[106,580,579,577,574,0],[114,580,579,577,576,0],[116,580,579,577,574,0],
  [148,697,697,689,688,0],[149,725,725,714,711,1],[150,738,735,730,728,0],[151,738,735,718,717,1],
  [152,769,760,755,754,1],[153,796,795,784,772,0],[154,778,768,766,761,0],[155,771,770,757,754,1],
  [156,785,785,779,777,0],[157,785,784,779,770,1],[158,777,771,753,753,0],[159,765,764,754,754,1],
  [160,765,762,758,755,1],[161,769,764,758,752,0],[162,784,784,773,772,1],[163,789,788,785,775,0],
  [164,788,783,780,779,0],[165,792,788,782,776,0],[166,785,785,779,779,0],[167,776,774,769,768,0],
  [168,781,779,769,768,1],[169,783,783,770,769,0],[170,790,790,784,783,1],[171,785,783,780,778,0],
  [172,792,789,783,783,0],[173,820,819,795,792,1],[174,819,815,815,810,0],[175,820,820,811,811,1],
  [176,826,823,818,817,0],[177,812,806,804,803,1],[178,803,802,788,785,0],[179,808,804,798,793,1],
  [180,810,804,796,792,1],[181,770,769,750,746,0],[182,757,742,740,740,1],[183,761,761,754,752,0],
  [184,785,783,770,769,1],[185,774,770,766,765,0],[186,789,788,782,782,0],[187,795,795,790,787,1],
  [188,802,797,790,790,0],[189,789,789,772,772,0],[190,788,788,780,773,0],[191,793,791,786,786,0],
  [192,800,800,797,792,1]
];

const months = [
  [0, "2023/07/20"], [30, "09"], [50, "10"], [70, "11"], [92, "12"],
  [113, "2024/01"], [135, "02"], [148, "03"], [169, "04"], [189, "05"]
];

const MAX = 842;
const MIN = 500;
const SLOTS = 197;
const svg = document.getElementById("chart");

function add(tag, attrs, text) {
  const el = document.createElementNS("http://www.w3.org/2000/svg", tag);
  for (const key in attrs) el.setAttribute(key, attrs[key]);
  if (text) el.textContent = text;
  svg.appendChild(el);
}

function draw() {
  svg.innerHTML = "";
  const left = 1, top = 1;
  const w = svg.clientWidth - 100;
  const h = svg.clientHeight - 39;
  const x = i => Math.round(left + 8 + i * w / SLOTS) + 0.5;
  const y = p => Math.round(top + (MAX - p) * h / (MAX - MIN)) + 0.5;

  for (let p = 510; p <= 840; p += 10) {
    add("line", { class: "grid", x1: left, x2: left + w, y1: y(p), y2: y(p) });
    if (p < 840) add("text", { class: "price-label", x: left + w + 3, y: y(p) + 6 }, String(p));
  }

  months.forEach(([i, name]) => {
    const year = name === "2024/01";
    add("line", { class: "grid", x1: x(i), x2: x(i), y1: top, y2: top + h });
    add("line", { class: "tick", x1: x(i), x2: x(i), y1: top + h, y2: top + h + 11 });
    add("text", {
      class: year ? "month-label year" : "month-label",
      x: i === 0 ? x(i) - 4 : x(i) - 1,
      y: top + h + 27,
      "text-anchor": i === 0 ? "start" : "middle"
    }, name);
  });

  add("rect", { class: "edge", x: left + 0.5, y: top + 0.5, width: w, height: h });

  candles.forEach(([i, high, up, down, low, rise]) => {
    const cls = rise ? "candle rise" : "candle fall";
    add("line", { class: cls, x1: x(i), x2: x(i), y1: y(high), y2: y(low) });
    add("rect", { class: cls, x: x(i) - 2, y: y(up), width: 4, height: Math.max(y(down) - y(up), 0.1) });
  });

  add("text", { class: "price-label", x: x(176), y: y(826) - 3, "text-anchor": "middle" }, "826.00");
  add("text", { class: "price-label", x: x(48), y: y(516) + 14, "text-anchor": "middle" }, "516.00");

  [[39, 557], [159, 772.5]].forEach(([i, p]) => {
    const cx = x(i), cy = y(p);
    add("path", { class: "marker", d: `M${cx - 5} ${cy}h10v14h-3l-2 3-2-3h-3z` });
    add("text", { class: "marker-text", x: cx, y: cy + 11, "text-anchor": "middle" }, "$");
  });
}

draw();
window.addEventListener("resize", draw);
```
